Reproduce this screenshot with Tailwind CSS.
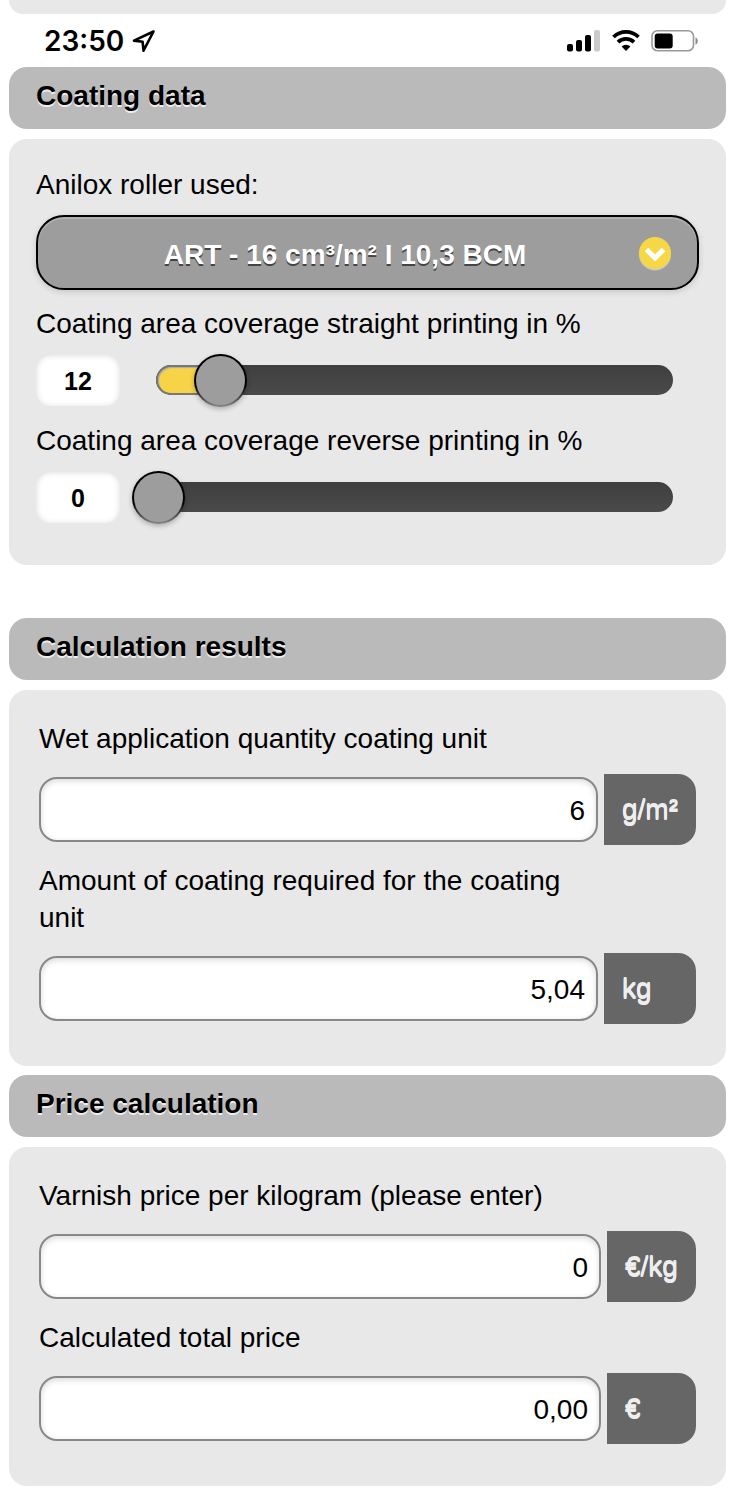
<!DOCTYPE html>
<html lang="en">
<head>
  <meta charset="UTF-8">
  <meta name="viewport" content="width=device-width, initial-scale=1.0">
  <title>Coating calculator</title>
  <script src="https://cdn.jsdelivr.net/npm/@tailwindcss/browser@4"></script>
</head>
<body class="bg-white text-black font-['Liberation_Sans',Arial,sans-serif] text-[28px] leading-[37px]">
  <div class="px-[9px]">
    <!-- End of the previous panel -->
    <div class="h-[14px] bg-[#e8e8e8] rounded-b-[18px]"></div>

    <!-- Status bar -->
    <header class="flex items-center justify-between h-[53px] pl-[35px] pr-7">
      <div class="flex items-center gap-2">
        <span class="font-['Inter',sans-serif] font-semibold text-[28px] pt-0.5">23:50</span>
        <svg class="w-6 h-6" viewBox="0 0 24 24" fill="none" stroke="#000" stroke-width="2.6" stroke-linejoin="round" aria-hidden="true">
          <path d="M21.5 2.5 2 11.6l8.6 1.1.9 8.9z"/>
        </svg>
      </div>
      <div class="flex items-center">
        <svg class="w-[34px] h-[22px]" viewBox="0 0 34 22" aria-hidden="true">
          <rect x="0" y="14" width="6" height="7.5" rx="2"/>
          <rect x="9" y="10" width="6" height="11.5" rx="2"/>
          <rect x="18" y="5" width="6" height="16.5" rx="2"/>
          <rect x="27" y="0" width="6" height="21.5" rx="2" fill="#cacaca"/>
        </svg>
        <svg class="w-7 h-[22px] ml-[11px]" viewBox="0 0 28 22" fill="none" stroke="#000" stroke-width="3.8" aria-hidden="true">
          <path d="M1.5 7a18 18 0 0 1 25 0"/>
          <path d="M6 12.2a11.5 11.5 0 0 1 16 0"/>
          <path d="M9.6 16.4a6.4 6.4 0 0 1 8.8 0L14 21z" fill="#000" stroke="none"/>
        </svg>
        <svg class="w-[47px] h-[22px] ml-[11px]" viewBox="0 0 47 22" aria-hidden="true">
          <rect x="1" y="0.8" width="41.5" height="20" rx="5.5" fill="none" stroke="#9a9a9a" stroke-width="1.6"/>
          <rect x="3.7" y="3.4" width="18" height="15" rx="3"/>
          <path d="M44.5 7.2c3 1.6 3 6 0 7.6z" fill="#8a8a8a"/>
        </svg>
      </div>
    </header>

    <!-- Coating data -->
    <section>
      <h2 class="bg-[#bababa] rounded-[18px] px-[27px] pt-[10px] pb-[15px] font-bold text-shadow-[0_2px_0_#eeeeee]">Coating data</h2>
      <div class="mt-[10px] bg-[#e8e8e8] rounded-[18px] px-[27px] pt-[27px] pb-[42px]">
        <label for="anilox" class="block">Anilox roller used:</label>
        <div class="relative mt-3">
          <select id="anilox" class="appearance-none block w-full h-[75px] pt-[3px] pl-5 pr-[65px] bg-[#9d9d9d] border-2 border-black rounded-[28px] text-white font-bold [text-align-last:center] text-shadow-[0_2px_0_#444444] shadow-[0_2px_6px_rgba(0,0,0,0.15),inset_0_2px_0_rgba(255,255,255,0.2)]">
            <option>ART - 16 cm³/m² I 10,3 BCM</option>
          </select>
          <svg class="absolute right-7 top-[22px] w-8 h-[34px] pointer-events-none" viewBox="0 0 32 34" aria-hidden="true">
            <circle cx="16" cy="17.5" r="16" fill="#c8c8c8"/>
            <circle cx="16" cy="16" r="16" fill="#f6d846"/>
            <path d="M7.5 12.5l8.5 8.5 8.5-8.5" fill="none" stroke="#fff" stroke-width="5"/>
          </svg>
        </div>

        <label for="straight" class="block mt-[15px]">Coating area coverage straight printing in %</label>
        <div class="flex items-center gap-3 mt-3">
          <input type="text" value="12" aria-label="Straight printing in %" class="w-[84px] h-[52px] pt-0.5 shrink-0 bg-white rounded-[14px] text-center font-bold text-[25px] shadow-[inset_0_1px_6px_rgba(0,0,0,0.16)]">
          <div class="grid grow items-center">
            <div class="col-start-1 row-start-1 h-[30px] ml-6 mr-[26px] rounded-full overflow-hidden bg-linear-to-b from-[#3f3f3f] to-[#4a4a4a]">
              <div class="h-full rounded-l-full bg-[#f7d348] border-2 border-[#777777] shadow-[inset_1px_1px_1px_#aaaaaa]" style="width: 12%"></div>
            </div>
            <input id="straight" type="range" min="0" max="100" value="12" class="col-start-1 row-start-1 appearance-none w-full h-[52px] bg-transparent [&::-webkit-slider-thumb]:appearance-none [&::-webkit-slider-thumb]:w-[53px] [&::-webkit-slider-thumb]:h-[53px] [&::-webkit-slider-thumb]:rounded-full [&::-webkit-slider-thumb]:border-2 [&::-webkit-slider-thumb]:border-transparent [&::-webkit-slider-thumb]:[background:linear-gradient(#9d9d9d,#9d9d9d)_padding-box,linear-gradient(#000000_60%,#888888)_border-box] [&::-webkit-slider-thumb]:shadow-[0_2px_5px_rgba(0,0,0,0.25)]">
          </div>
        </div>

        <label for="reverse" class="block mt-4">Coating area coverage reverse printing in %</label>
        <div class="flex items-center gap-3 mt-3">
          <input type="text" value="0" aria-label="Reverse printing in %" class="w-[84px] h-[52px] pt-0.5 shrink-0 bg-white rounded-[14px] text-center font-bold text-[25px] shadow-[inset_0_1px_6px_rgba(0,0,0,0.16)]">
          <div class="grid grow items-center">
            <div class="col-start-1 row-start-1 h-[30px] ml-6 mr-[26px] rounded-full bg-linear-to-b from-[#3f3f3f] to-[#4a4a4a]"></div>
            <input id="reverse" type="range" min="0" max="100" value="0" class="col-start-1 row-start-1 appearance-none w-full h-[52px] bg-transparent [&::-webkit-slider-thumb]:appearance-none [&::-webkit-slider-thumb]:w-[53px] [&::-webkit-slider-thumb]:h-[53px] [&::-webkit-slider-thumb]:rounded-full [&::-webkit-slider-thumb]:border-2 [&::-webkit-slider-thumb]:border-transparent [&::-webkit-slider-thumb]:[background:linear-gradient(#9d9d9d,#9d9d9d)_padding-box,linear-gradient(#000000_60%,#888888)_border-box] [&::-webkit-slider-thumb]:shadow-[0_2px_5px_rgba(0,0,0,0.25)]">
          </div>
        </div>
      </div>
    </section>

    <!-- Calculation results -->
    <section class="mt-[53px]">
      <h2 class="bg-[#bababa] rounded-[18px] px-[27px] pt-[10px] pb-[15px] font-bold text-shadow-[0_2px_0_#eeeeee]">Calculation results</h2>
      <div class="mt-[10px] bg-[#e8e8e8] rounded-[18px] px-[30px] pt-[30px] pb-[42px] grid grid-cols-[1fr_92px] gap-x-[6px] gap-y-[17px] items-center">
        <label for="wet" class="col-start-1">Wet application quantity coating unit</label>
        <input id="wet" type="text" value="6" class="col-start-1 min-w-0 w-full h-[65px] pt-0.5 px-[11px] bg-white border-2 border-[#888888] rounded-[18px] text-right shadow-[inset_0_2px_6px_rgba(0,0,0,0.15)]">
        <span class="flex items-center h-[71px] pl-[18px] pb-0.5 bg-[#666666] rounded-r-[18px] text-[#eeeeee] text-shadow-[0_1px_0_#eeeeee,0_2px_0_#eeeeee]">g/m²</span>
        <label for="amount" class="col-start-1">Amount of coating required for the coating unit</label>
        <input id="amount" type="text" value="5,04" class="col-start-1 min-w-0 w-full h-[65px] pt-0.5 px-[11px] bg-white border-2 border-[#888888] rounded-[18px] text-right shadow-[inset_0_2px_6px_rgba(0,0,0,0.15)]">
        <span class="flex items-center h-[71px] pl-[18px] pb-0.5 bg-[#666666] rounded-r-[18px] text-[#eeeeee] text-shadow-[0_1px_0_#eeeeee,0_2px_0_#eeeeee]">kg</span>
      </div>
    </section>

    <!-- Price calculation -->
    <section class="mt-[9px]">
      <h2 class="bg-[#bababa] rounded-[18px] px-[27px] pt-[10px] pb-[15px] font-bold text-shadow-[0_2px_0_#eeeeee]">Price calculation</h2>
      <div class="mt-[10px] bg-[#e8e8e8] rounded-[18px] px-[30px] pt-[30px] pb-[42px] grid grid-cols-[1fr_89px] gap-x-[6px] gap-y-[17px] items-center">
        <label for="price" class="col-start-1">Varnish price per kilogram (please enter)</label>
        <input id="price" type="text" value="0" class="col-start-1 min-w-0 w-full h-[65px] pt-0.5 px-[11px] bg-white border-2 border-[#888888] rounded-[18px] text-right shadow-[inset_0_2px_6px_rgba(0,0,0,0.15)]">
        <span class="flex items-center h-[71px] pl-[18px] pb-0.5 bg-[#666666] rounded-r-[18px] text-[#eeeeee] text-shadow-[0_1px_0_#eeeeee,0_2px_0_#eeeeee]">€/kg</span>
        <label for="total" class="col-start-1">Calculated total price</label>
        <input id="total" type="text" value="0,00" class="col-start-1 min-w-0 w-full h-[65px] pt-0.5 px-[11px] bg-white border-2 border-[#888888] rounded-[18px] text-right shadow-[inset_0_2px_6px_rgba(0,0,0,0.15)]">
        <span class="flex items-center h-[71px] pl-[18px] pb-0.5 bg-[#666666] rounded-r-[18px] text-[#eeeeee] text-shadow-[0_1px_0_#eeeeee,0_2px_0_#eeeeee]">€</span>
      </div>
    </section>
  </div>
</body>
</html>
